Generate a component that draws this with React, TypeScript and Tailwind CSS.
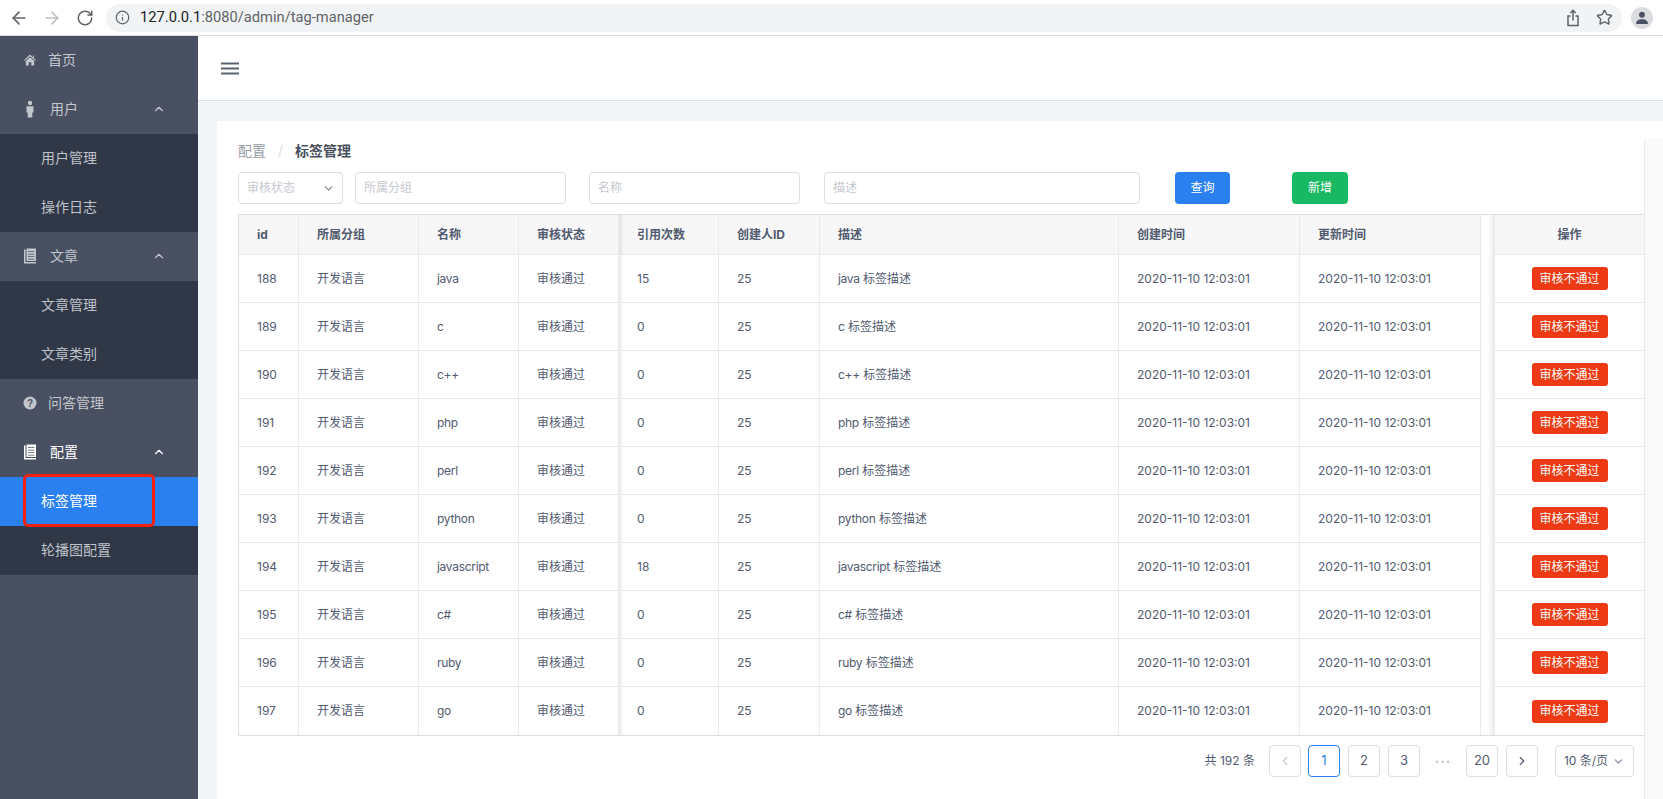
import { ArrowLeft, ArrowRight, RotateCw, Info, Star, ChevronUp, ChevronDown, ChevronLeft, ChevronRight } from 'lucide-react';

const rows = [
    { id: 188, name: 'java', refs: 15 },
    { id: 189, name: 'c', refs: 0 },
    { id: 190, name: 'c++', refs: 0 },
    { id: 191, name: 'php', refs: 0 },
    { id: 192, name: 'perl', refs: 0 },
    { id: 193, name: 'python', refs: 0 },
    { id: 194, name: 'javascript', refs: 18 },
    { id: 195, name: 'c#', refs: 0 },
    { id: 196, name: 'ruby', refs: 0 },
    { id: 197, name: 'go', refs: 0 },
];

const HomeIcon = () => (
    <svg width="14" height="14" viewBox="0 0 14 14" fill="currentColor">
        <path d="M7 1.500 1 7.200l.8.6L7 3.200l5.200 4.600.8-.6-2-1.900V2.600H10.200V4.500Z" />
        <path d="M7 4.300 2.800 8v4.500h2.900V9.300h2.600v3.200h2.900V8Z" />
    </svg>
);

const PersonIcon = () => (
    <svg width="14" height="18" viewBox="0 0 14 18" fill="currentColor">
        <circle cx="7" cy="3" r="2.200" />
        <path d="M3.500 6.200h7v6.300H9.300V17.500H4.700V12.500H3.500Z" />
    </svg>
);

const DocIcon = () => (
    <svg width="14" height="16" viewBox="0 0 14 16" fill="currentColor">
        <path fillRule="evenodd" d="M1 1.500h1.500V14H13v1.500H1ZM3.500 0.500H13V13H3.500ZM5 3.200v.7h6.500v-.7ZM5 5.700v.7h6.500v-.7ZM5 8.200v.7h6.500v-.7ZM5 10.700v.7h6.500v-.7Z" />
    </svg>
);

const HelpIcon = () => (
    <svg width="14" height="14" viewBox="0 0 14 14">
        <circle cx="7" cy="7" r="6.500" fill="currentColor" />
        <text x="7" y="10.500" textAnchor="middle" fontSize="10" fontWeight="700" fill="#4a5165" fontFamily="Liberation Sans, sans-serif">?</text>
    </svg>
);

const ShareIcon = () => (
    <svg width="14" height="18" viewBox="0 0 14 18" fill="none" stroke="#5f6368" strokeWidth="1.500">
        <path d="M4.500 7H2v9.500h10V7H9.500" />
        <path d="M7 11.500V1.500M4.300 4 7 1.300 9.700 4" />
    </svg>
);

const MenuItem = ({ icon, label, open, bright, narrow }: { icon: React.ReactNode; label: string; open?: boolean; bright?: boolean; narrow?: boolean }) => (
    <div className={`h-[49px] flex items-center pl-5 pr-8 pb-[2px] bg-[#495062] text-[14px] ${bright ? 'text-white' : 'text-[#c3c6cd]'}`}>
        <span className={`w-5 flex justify-center ${narrow ? 'mr-2' : 'mr-[10px]'}`}>{icon}</span>
        <span className="flex-1">{label}</span>
        {open && <ChevronUp size={14} strokeWidth={2} />}
    </div>
);

const SubItem = ({ label, active }: { label: string; active?: boolean }) => (
    <div className={`h-[49px] flex items-center pl-[41px] pb-[2px] text-[14px] ${active ? 'bg-[#2b80f0] text-white' : 'bg-[#303747] text-[#bfc2c9]'}`}>
        {label}
    </div>
);

const Field = ({ placeholder, className }: { placeholder: string; className: string }) => (
    <div className={`h-8 border border-[#dcdee2] rounded flex items-center px-2 text-[12px] text-[#c5c8ce] ${className}`}>
        {placeholder}
    </div>
);

const PageBtn = ({ children, active }: { children: React.ReactNode; active?: boolean }) => (
    <div className={`w-8 h-8 border rounded flex items-center justify-center text-[13px] ${active ? 'border-[#2b80f0] text-[#2b80f0]' : 'border-[#dcdee2] text-[#515a6e]'}`}>
        {children}
    </div>
);

const th = 'h-10 font-bold text-left pl-[18px] bg-[#f7f7f8] border-b border-r border-[#e8eaec] text-[#515a6e]';
const td = 'h-12 pl-[18px] border-b border-r border-[#e8eaec] text-[#515a6e]';
// shadows of the fixed columns, painted on the neighbouring cells so they run on without a break
const leftShade = 'bg-[linear-gradient(to_right,rgba(0,0,0,0.09),transparent_5px)]';
const gapShade = 'bg-[linear-gradient(to_right,transparent_55%,rgba(0,0,0,0.08))]';

export default function App() {
    return (
        <div className="h-screen overflow-hidden flex flex-col bg-white font-['Inter','Noto_Sans_CJK_SC',sans-serif]">
            {/* browser bar */}
            <div className="h-9 shrink-0 flex items-center border-b border-[#dadce0] bg-white">
                <ArrowLeft size={20} className="ml-[9px] text-[#5f6368]" />
                <ArrowRight size={20} className="ml-[13px] text-[#bcbfc4]" />
                <RotateCw size={18} className="ml-[14px] text-[#5f6368]" />
                <div className="ml-3 flex-1 h-7 rounded-full bg-[#f1f3f4] flex items-center pl-[9px] pr-[9px] font-['Roboto',sans-serif] text-[14.7px]">
                    <Info size={15} className="text-[#5f6368] mr-[10px]" />
                    <span className="text-[#202124]">127.0.0.1</span>
                    <span className="text-[#5f6368]">:8080/admin/tag-manager</span>
                    <span className="flex-1" />
                    <ShareIcon />
                    <Star size={17} strokeWidth={2} className="ml-4 text-[#5f6368]" />
                </div>
                <div className="ml-[9px] mr-[10px] w-[22px] h-[22px] rounded-full bg-[#dadce0] flex items-center justify-center">
                    <svg width="14" height="14" viewBox="0 0 13 13" fill="#4a5064">
                        <circle cx="6.500" cy="3.500" r="2.700" />
                        <path d="M1 12c0-3 2.500-4.300 5.500-4.300S12 9 12 12Z" />
                    </svg>
                </div>
            </div>

            <div className="flex-1 flex min-h-0">
                {/* sidebar */}
                <aside className="w-[198px] shrink-0 bg-[#495062]">
                    <MenuItem icon={<HomeIcon />} label="首页" narrow />
                    <MenuItem icon={<PersonIcon />} label="用户" open />
                    <SubItem label="用户管理" />
                    <SubItem label="操作日志" />
                    <MenuItem icon={<DocIcon />} label="文章" open />
                    <SubItem label="文章管理" />
                    <SubItem label="文章类别" />
                    <MenuItem icon={<HelpIcon />} label="问答管理" narrow />
                    <MenuItem icon={<DocIcon />} label="配置" open bright />
                    <div className="relative">
                        <SubItem label="标签管理" active />
                        <div className="absolute left-[23px] top-[-3px] w-[132px] h-[53px] border-[3px] border-[#f5210d] rounded-[5px]" />
                    </div>
                    <SubItem label="轮播图配置" />
                </aside>

                <main className="flex-1 min-w-0 flex flex-col bg-[#f2f5f8]">
                    <div className="h-[65px] shrink-0 bg-white border-b border-[#dcdfe3] flex items-center pl-[23px]">
                        <svg width="18" height="14" viewBox="0 0 18 14" fill="#5b6270">
                            <rect y="1.500" width="18" height="2" />
                            <rect y="6.500" width="18" height="2" />
                            <rect y="11.500" width="18" height="2" />
                        </svg>
                    </div>

                    <div className="flex-1 min-h-0 ml-[19px] mt-5 bg-white flex">
                        <div className="flex-1 min-w-0 pl-[21px] pt-[19px] text-[12px]">
                            <div className="h-[20px] flex items-center text-[14px]">
                                <span className="text-[#999ca3]">配置</span>
                                <span className="mx-3 text-[#dcdee2]">/</span>
                                <span className="font-bold text-[#495060]">标签管理</span>
                            </div>
                            <div className="mt-3 flex items-center">
                                <div className="w-[105px] h-8 border border-[#dcdee2] rounded flex items-center justify-between pl-2 pr-[7px] text-[12px] text-[#c5c8ce]">
                                    审核状态
                                    <ChevronDown size={13} className="text-[#808695]" />
                                </div>
                                <Field placeholder="所属分组" className="w-[211px] ml-3" />
                                <Field placeholder="名称" className="w-[211px] ml-[23px]" />
                                <Field placeholder="描述" className="w-[316px] ml-6" />
                                <div className="ml-[35px] w-[55px] h-8 rounded bg-[#2b80f0] text-white flex items-center justify-center">查询</div>
                                <div className="ml-[62px] w-[56px] h-8 rounded bg-[#19b963] text-white flex items-center justify-center">新增</div>
                            </div>

                            <table className="mt-[10px] w-[1407px] table-fixed border-separate border-spacing-0 border border-[#dcdee2] text-[12px]">
                                <colgroup>
                                    <col className="w-[60px]" />
                                    <col className="w-[120px]" />
                                    <col className="w-[100px]" />
                                    <col className="w-[100px]" />
                                    <col className="w-[100px]" />
                                    <col className="w-[101px]" />
                                    <col className="w-[299px]" />
                                    <col className="w-[181px]" />
                                    <col className="w-[181px]" />
                                    <col className="w-[13px]" />
                                    <col className="w-[150px]" />
                                </colgroup>
                                <thead>
                                    <tr>
                                        <th className={th}>id</th>
                                        <th className={th}>所属分组</th>
                                        <th className={th}>名称</th>
                                        <th className={th}>审核状态</th>
                                        <th className={`${th} ${leftShade}`}>引用次数</th>
                                        <th className={th}>创建人ID</th>
                                        <th className={th}>描述</th>
                                        <th className={th}>创建时间</th>
                                        <th className={th}>更新时间</th>
                                        <th className={gapShade} />
                                        <th className={`${th} !text-center !pl-0 !border-r-0 border-l`}>操作</th>
                                    </tr>
                                </thead>
                                <tbody>
                                    {rows.map((r, i) => {
                                        const b = i === rows.length - 1 ? '!border-b-0' : '';
                                        return (
                                            <tr key={r.id}>
                                                <td className={`${td} ${b}`}>{r.id}</td>
                                                <td className={`${td} ${b}`}>开发语言</td>
                                                <td className={`${td} ${b}`}><span className="tracking-[-0.3px]">{r.name}</span></td>
                                                <td className={`${td} ${b}`}>审核通过</td>
                                                <td className={`${td} ${b} ${leftShade}`}>{r.refs}</td>
                                                <td className={`${td} ${b}`}>25</td>
                                                <td className={`${td} ${b}`}><span className="tracking-[-0.3px]">{r.name}</span> 标签描述</td>
                                                <td className={`${td} ${b}`}>2020-11-10 12:03:01</td>
                                                <td className={`${td} ${b}`}>2020-11-10 12:03:01</td>
                                                <td className={gapShade} />
                                                <td className={`${td} ${b} !pl-0 !border-r-0 border-l`}>
                                                    <div className="w-[76px] h-[23px] mx-auto rounded-[3px] bg-[#ed3a14] text-white flex items-center justify-center">审核不通过</div>
                                                </td>
                                            </tr>
                                        );
                                    })}
                                </tbody>
                            </table>

                            <div className="mt-[9px] w-[1407px] flex items-center justify-end pr-[11px] text-[#515a6e]">
                                <span className="text-[12px] mr-[14px]">共 192 条</span>
                                <PageBtn><ChevronLeft size={14} className="text-[#c5c8ce]" /></PageBtn>
                                <span className="w-[7px]" />
                                <PageBtn active>1</PageBtn>
                                <span className="w-2" />
                                <PageBtn>2</PageBtn>
                                <span className="w-2" />
                                <PageBtn>3</PageBtn>
                                <span className="w-[46px] text-center text-[8px] text-[#c5c8ce] tracking-[1px]">•••</span>
                                <PageBtn>20</PageBtn>
                                <span className="w-2" />
                                <PageBtn><ChevronRight size={14} /></PageBtn>
                                <div className="ml-[17px] w-[79px] h-8 border border-[#dcdee2] rounded flex items-center justify-center gap-1 text-[12px]">
                                    10 条/页
                                    <ChevronDown size={13} className="text-[#808695]" />
                                </div>
                            </div>
                        </div>
                        {/* page scrollbar */}
                        <div className="w-[19px] shrink-0 mt-[18px] bg-[#fafafa] border-l border-[#e8e8e8]" />
                    </div>
                </main>
            </div>
        </div>
    );
}
